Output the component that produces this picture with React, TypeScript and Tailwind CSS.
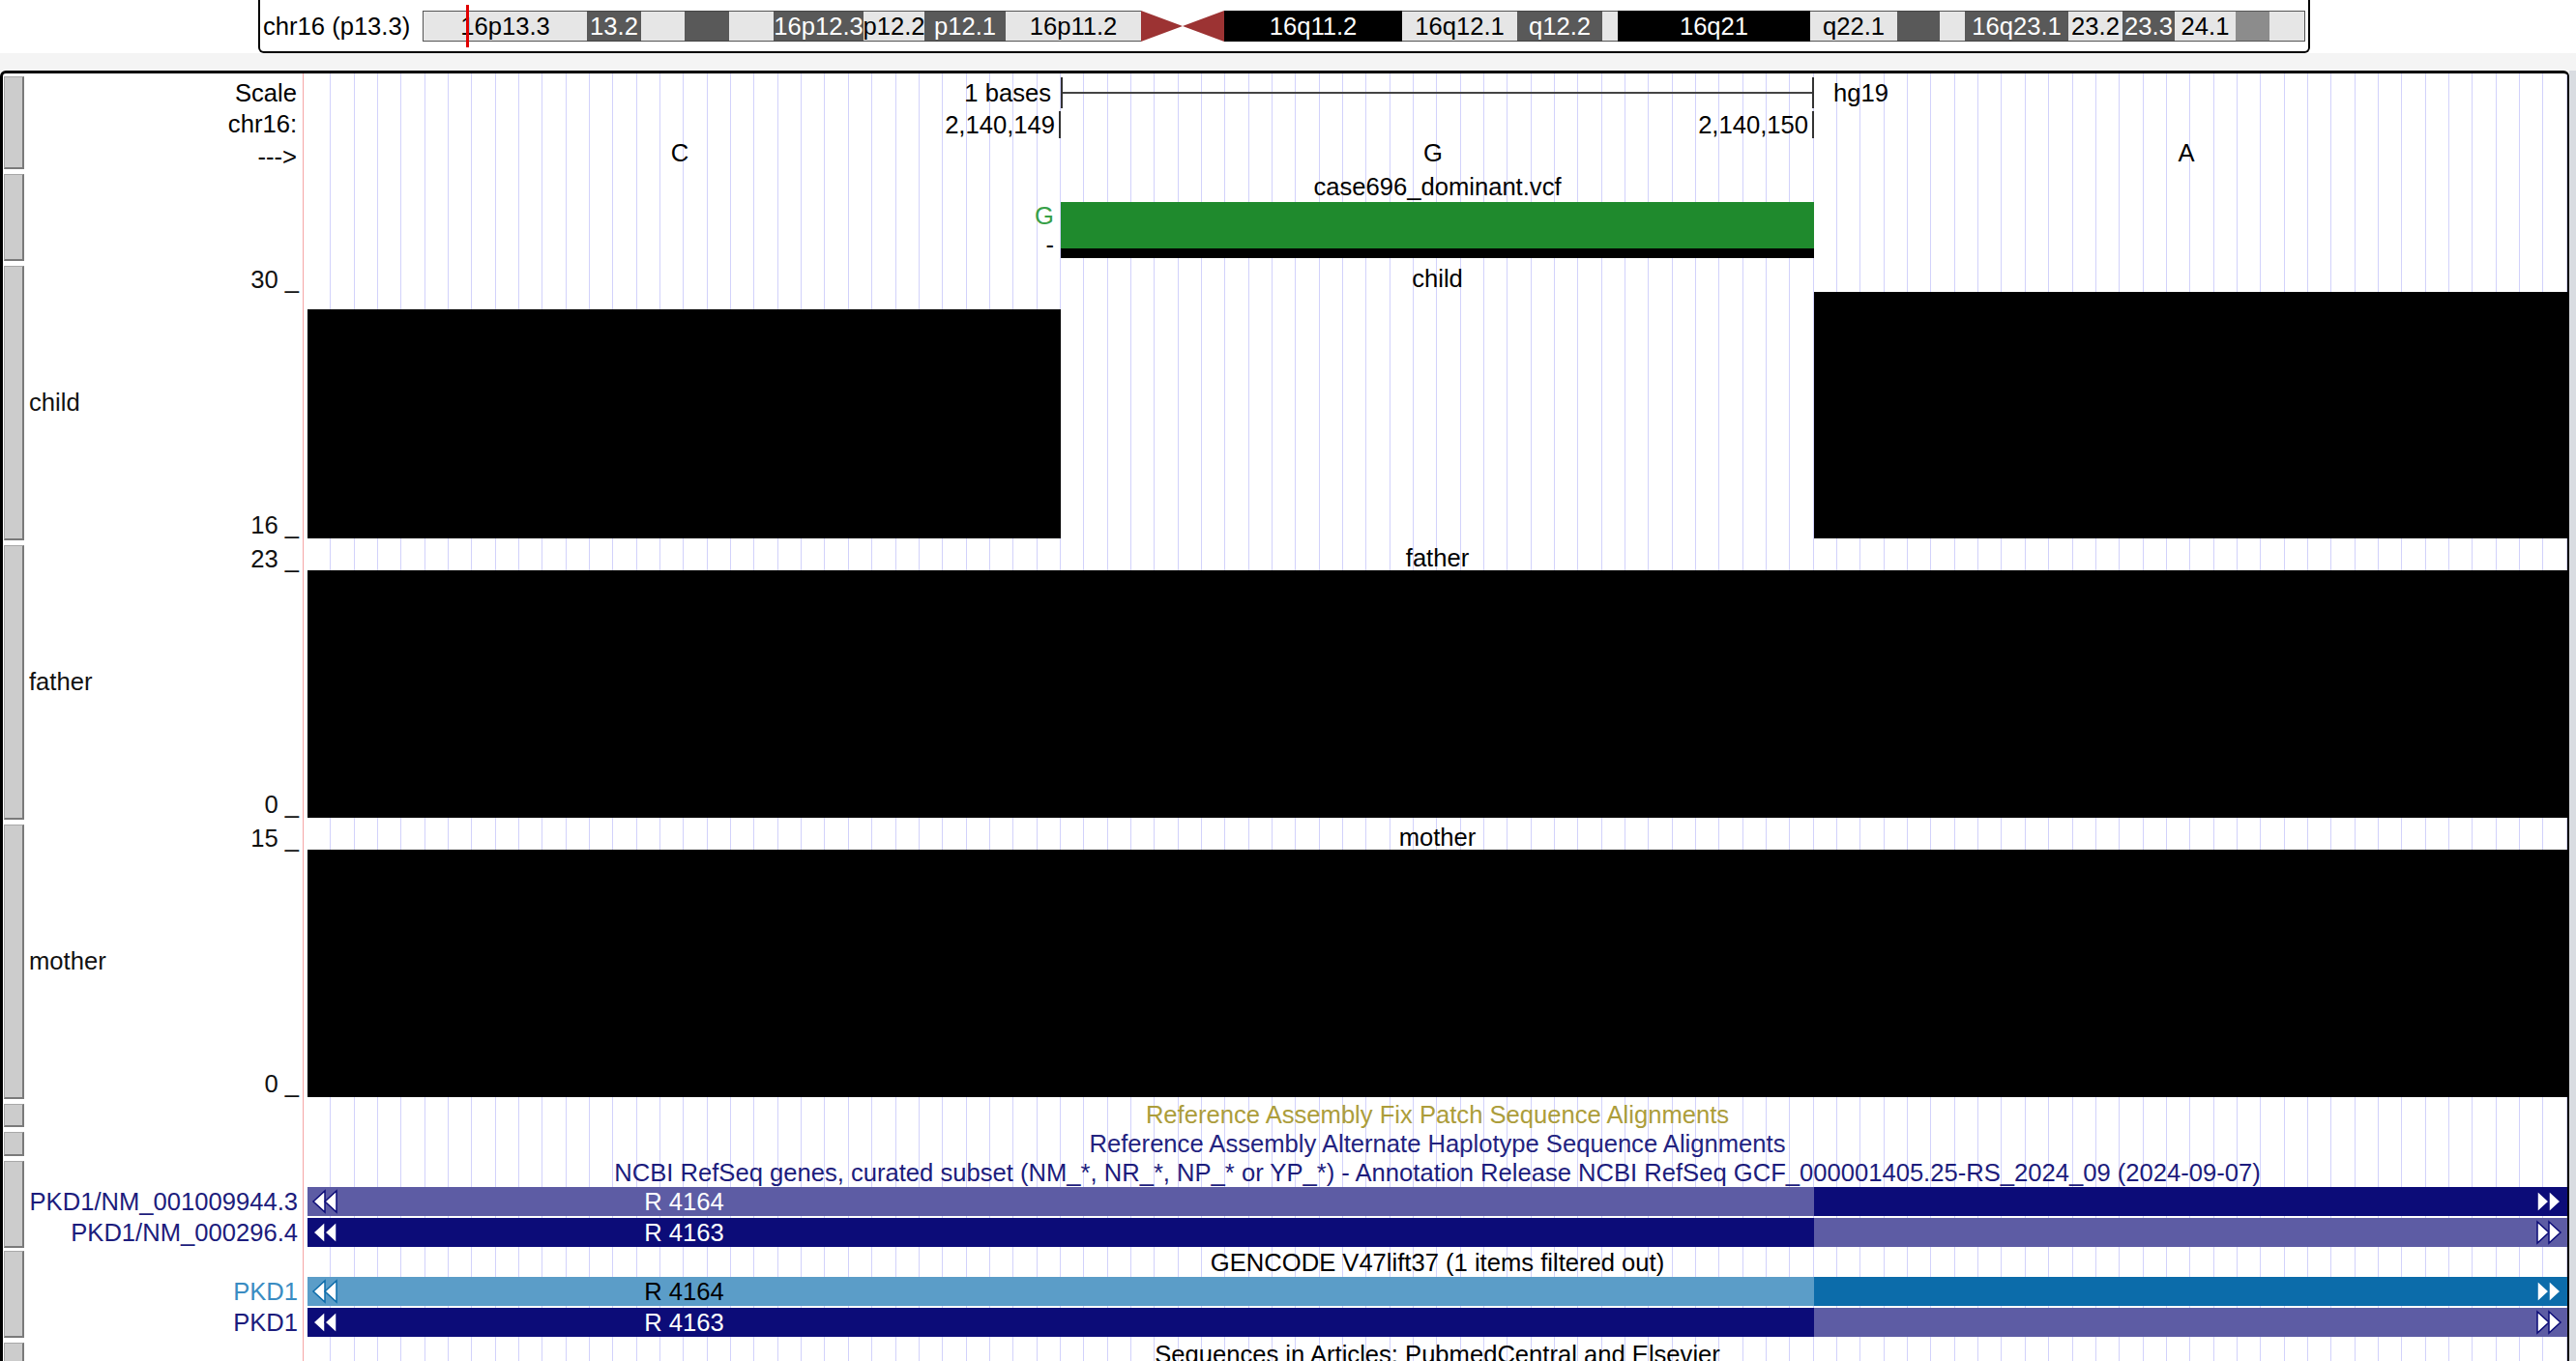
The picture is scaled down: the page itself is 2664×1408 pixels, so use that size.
import React from "react";

const GRID =
  "bg-[image:repeating-linear-gradient(90deg,transparent_0px,transparent_23.34px,#d2d2fb_23.34px,#d2d2fb_24.34px)]";

type Kind = "l" | "d" | "k" | "m" | "c";
type Band = { w: string; kind: Kind; label?: string; red?: boolean };

const kindClass: Record<Kind, string> = {
  l: "bg-[#e6e6e6] text-black border-y border-[#555]",
  d: "bg-[#595959] text-white border-y border-[#444]",
  k: "bg-black text-white border-y border-black",
  m: "bg-[#8c8c8c] text-black border-y border-[#555]",
  c: "bg-white",
};

const bands: Band[] = [
  { w: "w-[169px]", kind: "l", label: "16p13.3", red: true },
  { w: "w-[56px]", kind: "d", label: "13.2" },
  { w: "w-[45px]", kind: "l" },
  { w: "w-[46px]", kind: "d" },
  { w: "w-[46px]", kind: "l" },
  { w: "w-[93px]", kind: "d", label: "16p12.3" },
  { w: "w-[63px]", kind: "l", label: "p12.2" },
  { w: "w-[84px]", kind: "d", label: "p12.1" },
  { w: "w-[140px]", kind: "l", label: "16p11.2" },
  { w: "w-[86px]", kind: "c" },
  { w: "w-[184px]", kind: "k", label: "16q11.2" },
  { w: "w-[119px]", kind: "l", label: "16q12.1" },
  { w: "w-[88px]", kind: "d", label: "q12.2" },
  { w: "w-[16px]", kind: "l" },
  { w: "w-[199px]", kind: "k", label: "16q21" },
  { w: "w-[90px]", kind: "l", label: "q22.1" },
  { w: "w-[44px]", kind: "d" },
  { w: "w-[26px]", kind: "l" },
  { w: "w-[107px]", kind: "d", label: "16q23.1" },
  { w: "w-[56px]", kind: "l", label: "23.2" },
  { w: "w-[54px]", kind: "d", label: "23.3" },
  { w: "w-[63px]", kind: "l", label: "24.1" },
  { w: "w-[35px]", kind: "m" },
  { w: "w-[36px]", kind: "l" },
];

function Ideogram() {
  return (
    <div className="h-[55px] bg-white">
      <div className="ml-[267px] w-[2122px] h-[55px] border-2 border-t-0 border-black rounded-b-[6px] flex items-center">
        <div className="w-[168px] pl-[3px] whitespace-nowrap leading-[30px]">chr16 (p13.3)</div>
        <div className="flex h-[32px] border-l border-r border-[#555]">
          {bands.map((b, i) =>
            b.kind === "c" ? (
              <div key={i} className={`${b.w} h-full bg-white`}>
                <svg width="86" height="32" viewBox="0 0 86 32" className="block">
                  <polygon points="0,0 43,16 0,32" fill="#9c3333" />
                  <polygon points="86,0 43,16 86,32" fill="#9c3333" />
                </svg>
              </div>
            ) : (
              <div
                key={i}
                className={`${b.w} h-full flex items-center justify-center whitespace-nowrap leading-[30px] ${kindClass[b.kind]} ${b.red ? "relative" : ""}`}
              >
                {b.label ?? ""}
                {b.red && (
                  <div className="absolute left-[44px] top-[-7px] bottom-[-7px] w-[3px] bg-[#e00000]" />
                )}
              </div>
            )
          )}
        </div>
      </div>
    </div>
  );
}

function Btn() {
  return (
    <div className="w-[23px] h-full flex flex-col pl-[1px] pt-[3px] pb-[2px]">
      <div className="flex-1 w-[21px] bg-[#cccccc] border-l border-t border-[#a8a8a8] border-r-2 border-b-2 border-r-[#7a7a7a] border-b-[#7a7a7a]" />
    </div>
  );
}

function Row({
  h,
  label,
  children,
}: {
  h: string;
  label?: React.ReactNode;
  children?: React.ReactNode;
}) {
  return (
    <div className={`flex ${h}`}>
      <Btn />
      <div className="w-[287px] h-full">{label}</div>
      <div className="h-full border-l border-[#f6a6a6] pl-[4px]">
        <div className={`w-[2337px] h-full ${GRID}`}>{children}</div>
      </div>
    </div>
  );
}

function Ruler() {
  return (
    <Row
      h="h-[101px]"
      label={
        <div className="flex flex-col items-end pr-[6px] pt-[4px]">
          <div className="h-[32px] leading-[32px]">Scale</div>
          <div className="h-[30px] leading-[30px] mt-[1px]">chr16:</div>
          <div className="h-[30px] leading-[30px] mt-[4px]">---&gt;</div>
        </div>
      }
    >
      <div className="flex flex-col pt-[4px]">
        <div className="grid grid-cols-3 h-[32px]">
          <div className="h-[32px] leading-[32px] text-right pr-[10px]">1 bases</div>
          <div className="border-x-2 border-[#333] flex items-center">
            <div className="h-[2px] w-full bg-[#444]" />
          </div>
          <div className="h-[32px] leading-[32px] pl-[20px]">hg19</div>
        </div>
        <div className="grid grid-cols-3 h-[28px] mt-[3px]">
          <div className="flex items-center justify-end">
            <span className="leading-[28px]">2,140,149</span>
            <div className="ml-[4px] w-[2px] h-full bg-[#333]" />
          </div>
          <div className="flex items-center justify-end">
            <span className="leading-[28px]">2,140,150</span>
            <div className="ml-[4px] w-[2px] h-full bg-[#333]" />
          </div>
          <div />
        </div>
        <div className="grid grid-cols-3 h-[30px]">
          <div className="leading-[31px] text-center pr-[9px]">C</div>
          <div className="leading-[31px] text-center pr-[9px]">G</div>
          <div className="leading-[31px] text-center pr-[9px]">A</div>
        </div>
      </div>
    </Row>
  );
}

function Vcf() {
  return (
    <Row h="h-[95px]">
      <div className="flex flex-col">
        <div className="h-[32px] flex items-center justify-center whitespace-nowrap">case696_dominant.vcf</div>
        <div className="grid grid-cols-3 h-[58px]">
          <div className="flex flex-col items-end pr-[7px]">
            <div className="h-[29px] leading-[29px] text-[#37a047]">G</div>
            <div className="h-[29px] leading-[30px]">-</div>
          </div>
          <div className="flex flex-col">
            <div className="h-[48px] bg-[#1f8a2d]" />
            <div className="h-[10px] bg-black" />
          </div>
          <div />
        </div>
      </div>
    </Row>
  );
}

function Graph({
  name,
  top,
  bottom,
  bars,
}: {
  name: string;
  top: string;
  bottom: string;
  bars: [string, string, string];
}) {
  return (
    <Row
      h="h-[289px]"
      label={
        <div className="h-full flex">
          <div className="flex-1 flex items-center pl-[4px] text-[#111]">{name}</div>
          <div className="flex flex-col justify-between items-end pr-[4px] pt-[3px] pb-[4px] text-[#111]">
            <div className="leading-[28px] whitespace-pre">{top} _</div>
            <div className="leading-[28px] whitespace-pre">{bottom} _</div>
          </div>
        </div>
      }
    >
      <div className="flex flex-col h-full">
        <div className="h-[29px] pt-[4px] flex items-center justify-center">{name}</div>
        <div className="h-[256px] grid grid-cols-3 items-end">
          {bars.map((b, i) => (
            <div key={i} className={`${b} bg-black`} />
          ))}
        </div>
      </div>
    </Row>
  );
}

function TitleRow({ h, text, color }: { h: string; text: string; color: string }) {
  return (
    <Row h={h}>
      <div className={`h-full flex items-center justify-center whitespace-nowrap ${color}`}>{text}</div>
    </Row>
  );
}

function LeftArrows({ stroke }: { stroke: string }) {
  return (
    <svg width="30" height="30" viewBox="0 0 30 30" className="absolute left-[3px] top-0">
      <polygon points="3,15 15,4 15,26" fill="white" stroke={stroke} strokeWidth="1.5" />
      <polygon points="15,15 27,4 27,26" fill="white" stroke={stroke} strokeWidth="1.5" />
    </svg>
  );
}

function RightArrows({ stroke }: { stroke: string }) {
  return (
    <svg width="30" height="30" viewBox="0 0 30 30" className="absolute right-[4px] top-0">
      <polygon points="3,4 15,15 3,26" fill="white" stroke={stroke} strokeWidth="1.5" />
      <polygon points="15,4 27,15 15,26" fill="white" stroke={stroke} strokeWidth="1.5" />
    </svg>
  );
}

function GeneBar({
  left,
  right,
  text,
  textColor,
  stroke,
}: {
  left: string;
  right: string;
  text: string;
  textColor: string;
  stroke: string;
}) {
  return (
    <div className="relative h-[30px] flex">
      <div className={`w-[1558px] h-full ${left}`}>
        <div className={`w-[779px] h-full flex items-center justify-center ${textColor}`}>{text}</div>
      </div>
      <div className={`flex-1 h-full ${right}`} />
      <LeftArrows stroke={stroke} />
      <RightArrows stroke={stroke} />
    </div>
  );
}

function GeneTrack({
  title,
  titleColor,
  labels,
  rows,
}: {
  title: string;
  titleColor: string;
  labels: { text: string; color: string }[];
  rows: { left: string; right: string; text: string; textColor: string; stroke: string }[];
}) {
  return (
    <Row
      h="h-[95px]"
      label={
        <div className="flex flex-col items-end pr-[5px]">
          <div className="h-[30px]" />
          <div className={`h-[30px] flex items-center whitespace-nowrap ${labels[0].color}`}>{labels[0].text}</div>
          <div className="h-[2px]" />
          <div className={`h-[30px] flex items-center whitespace-nowrap ${labels[1].color}`}>{labels[1].text}</div>
        </div>
      }
    >
      <div className="flex flex-col">
        <div className={`h-[30px] flex items-center justify-center whitespace-nowrap ${titleColor}`}>{title}</div>
        <GeneBar {...rows[0]} />
        <div className="h-[2px]" />
        <GeneBar {...rows[1]} />
      </div>
    </Row>
  );
}

export default function App() {
  return (
    <div className="w-[2664px] h-[1408px] overflow-hidden bg-[#f4f4f4] font-['Liberation_Sans',Arial,sans-serif] text-[25.6px] text-black">
      <Ideogram />
      <div className="h-[18px] bg-[#f4f4f4]" />
      <div className="flex">
        <div className="w-[2657px] bg-white border-t-[3px] border-l-[3px] border-r-2 border-black rounded-t-[6px] overflow-hidden">
          <Ruler />
          <Vcf />
          <Graph name="child" top="30" bottom="16" bars={["h-[237px]", "h-0", "h-[255px]"]} />
          <Graph name="father" top="23" bottom="0" bars={["h-[256px]", "h-[256px]", "h-[256px]"]} />
          <Graph name="mother" top="15" bottom="0" bars={["h-[256px]", "h-[256px]", "h-[256px]"]} />
          <TitleRow h="h-[29px]" text="Reference Assembly Fix Patch Sequence Alignments" color="text-[#ac9d3b]" />
          <TitleRow h="h-[30px]" text="Reference Assembly Alternate Haplotype Sequence Alignments" color="text-[#23237f]" />
          <div className="h-[93px] overflow-hidden">
            <GeneTrack
              title="NCBI RefSeq genes, curated subset (NM_*, NR_*, NP_* or YP_*) - Annotation Release NCBI RefSeq GCF_000001405.25-RS_2024_09 (2024-09-07)"
              titleColor="text-[#1c1c7c]"
              labels={[
                { text: "PKD1/NM_001009944.3", color: "text-[#1c1c7c]" },
                { text: "PKD1/NM_000296.4", color: "text-[#1c1c7c]" },
              ]}
              rows={[
                { left: "bg-[#5d5ca4]", right: "bg-[#0c0c78]", text: "R 4164", textColor: "text-white", stroke: "#0c0c78" },
                { left: "bg-[#0c0c78]", right: "bg-[#5d5ca4]", text: "R 4163", textColor: "text-white", stroke: "#0c0c78" },
              ]}
            />
          </div>
          <GeneTrack
            title="GENCODE V47lift37 (1 items filtered out)"
            titleColor="text-black"
            labels={[
              { text: "PKD1", color: "text-[#3a8cc2]" },
              { text: "PKD1", color: "text-[#1c1c7c]" },
            ]}
            rows={[
              { left: "bg-[#5b9dc8]", right: "bg-[#0c6caa]", text: "R 4164", textColor: "text-black", stroke: "#0c6caa" },
              { left: "bg-[#0c0c78]", right: "bg-[#5d5ca4]", text: "R 4163", textColor: "text-white", stroke: "#0c0c78" },
            ]}
          />
          <Row h="h-[60px]">
            <div className="h-[30px] flex items-center justify-center whitespace-nowrap">
              Sequences in Articles: PubmedCentral and Elsevier
            </div>
          </Row>
        </div>
        <div className="flex-1 bg-[#d9dce1]" />
      </div>
    </div>
  );
}
